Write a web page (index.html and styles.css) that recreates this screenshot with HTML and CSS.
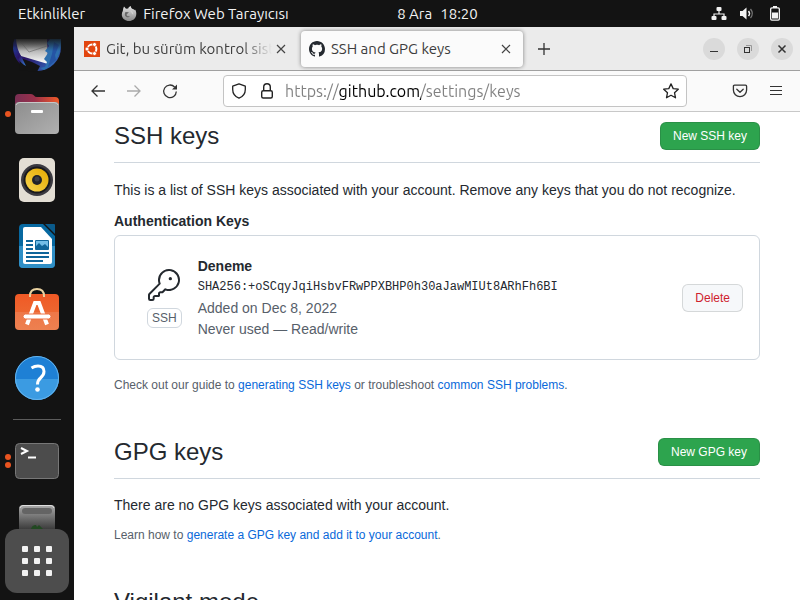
FILE: index.html
```html
<!DOCTYPE html>
<html lang="tr">
<head>
<meta charset="utf-8">
<title>SSH and GPG keys</title>
<link rel="stylesheet" href="styles.css">
</head>
<body>
<header class="topbar">
  <div class="topbar-side">
    <button class="bar-btn" type="button">Etkinlikler</button>
    <button class="bar-btn app-menu" type="button">
      <svg width="16" height="16" viewBox="0 0 16 16"><defs><linearGradient id="fx" x1="0" y1="0" x2="0" y2="1"><stop offset="0" stop-color="#e4e4e4"/><stop offset="1" stop-color="#888"/></linearGradient></defs><path fill="url(#fx)" d="M3 .6 5 2.800l2.200-.2C7.400 1.500 8.500.6 9.800 0c0 1.600 1 2.400 1.800 3.100L12.500 3l.6 1.300.9-.7C15.200 5.500 15.500 7 15.200 9c-.5 3.700-3.600 6-7.200 6S.8 12.500.8 8.700c0-1.500.3-2.700 1-3.700.2-1.600.6-3.200 1.200-4.400Z"/><path fill="#666" d="M4.500 6 8 6.200 6.500 7.500l-1 1.200c.6 1.500 2 2 3.500 1.300-1 1.700-4 1.700-5-.6-.3-1.400 0-2.400.5-3.400Z"/><path fill="#d0d0d0" d="M9 4.500c2.200.2 3.500 2 3.300 4.200L11 7.400Z"/></svg>
      <span>Firefox Web Tarayıcısı</span>
    </button>
  </div>
  <button class="bar-btn clock" type="button"><span>8 Ara</span><span>18:20</span></button>
  <div class="topbar-side status">
    <svg width="16" height="16" viewBox="0 0 16 16" fill="#f2f2f2"><rect x="5.500" y="1" width="5" height="4" rx="1"/><path d="M7.400 5h1.200v2.400h5V11h-1.200V8.600H3.600V11H2.400V7.400h5Z"/><rect x=".5" y="10" width="5" height="4" rx="1"/><rect x="10.500" y="10" width="5" height="4" rx="1"/></svg>
    <svg width="16" height="16" viewBox="0 0 16 16"><path fill="#f2f2f2" d="M1 5h2.500L7.500 1.500v12l-4-3.500H1Z"/><path d="M9.500 5q2 2.500 0 5" fill="none" stroke="#f2f2f2" stroke-width="1.500"/><path d="M11.500 3q3.600 4.500 0 9" fill="none" stroke="#777" stroke-width="1.300"/></svg>
    <svg width="16" height="16" viewBox="0 0 16 16" fill="#f2f2f2"><path fill-rule="evenodd" d="M6 0h4v1.300h1.200A1.800 1.800 0 0 1 13 3.100v9.900a1.800 1.800 0 0 1-1.800 1.800H4.800A1.800 1.800 0 0 1 3 13V3.100a1.800 1.800 0 0 1 1.800-1.800H6Zm-1 2.600a.7.7 0 0 0-.7.700v9.500a.7.700 0 0 0 .7.700h6a.7.700 0 0 0 .7-.7V3.300a.7.700 0 0 0-.7-.7Z"/><rect x="5" y="6.500" width="6" height="6"/></svg>
  </div>
</header>

<div class="desktop">
  <nav class="dock" aria-label="Dock">
    <ul class="dock-list">
      <li class="dock-item clipped">
        <svg width="48" height="33" viewBox="0 15 48 33"><defs><linearGradient id="tb" x1="0" y1="0" x2="1" y2="1"><stop offset="0" stop-color="#1d3f9c"/><stop offset=".5" stop-color="#2a1466"/><stop offset="1" stop-color="#367fd8"/></linearGradient><linearGradient id="en" x1="0" y1="0" x2="0" y2="1"><stop offset="0" stop-color="#777"/><stop offset="1" stop-color="#fff"/></linearGradient><linearGradient id="fade" x1="0" y1="0" x2="0" y2="1"><stop offset="0" stop-color="#131313" stop-opacity=".9"/><stop offset="1" stop-color="#131313" stop-opacity="0"/></linearGradient></defs><circle cx="24" cy="23" r="24" fill="url(#tb)"/><path d="M3 15h31l1 25L8 32Q4 26 3 15Z" fill="url(#en)"/><path d="m6 16 10 12 18-6" fill="none" stroke="#888"/><path fill="#2d6fae" d="M37 15h11c1 14-5 25-17 31l-4-2 5-1 2-5-3-3 4-6-3-2 4-5-2-3Z"/><path fill="#2554a5" d="m41 18 5 3-4 10 1 5-8 7 4-13Z"/><path fill="#131313" d="m7 34 12 4 8 4-3 6L6 46Z"/><path fill="url(#tb)" d="M0 24c2 8 7 15 13 18L8 32 2 22Z"/><rect y="14" width="48" height="13" fill="url(#fade)"/></svg>
      </li>
      <li class="dock-item">
        <span class="dots"><i></i></span>
        <svg width="48" height="48" viewBox="0 0 48 48"><defs><linearGradient id="fo" x1="0" x2="1"><stop offset="0" stop-color="#792f54"/><stop offset=".45" stop-color="#9b304a"/><stop offset="1" stop-color="#f05a28"/></linearGradient><linearGradient id="fg" x1="0" y1="0" x2="1" y2="1"><stop offset="0" stop-color="#8d8d8d"/><stop offset="1" stop-color="#b0b0b0"/></linearGradient></defs><path fill="url(#fo)" d="M2 8q0-4 4-4h12q2 0 3 1.500T24 7h18q4 0 4 4v9H2Z"/><rect x="2" y="12" width="44" height="32" rx="4" fill="url(#fg)"/><path d="M3 15q1-2.500 4-2.500h34q3 0 4 2.500" fill="none" stroke="#c8c8c8"/><rect x="18" y="20" width="12" height="3" rx="1" fill="#fff"/></svg>
      </li>
      <li class="dock-item">
        <svg width="48" height="48" viewBox="0 0 48 48"><defs><linearGradient id="rh" x1="0" y1="1" x2="1" y2="0"><stop offset="0" stop-color="#f8d54e"/><stop offset="1" stop-color="#e5a900"/></linearGradient></defs><rect x="6" y="2" width="36" height="44" rx="5" fill="#e3ded4"/><circle cx="24" cy="24" r="16" fill="#3b3a40"/><circle cx="24" cy="24" r="13.500" fill="#19191d"/><circle cx="24" cy="24" r="11.500" fill="url(#rh)"/><circle cx="24" cy="24" r="5" fill="#222329"/><circle cx="24" cy="23" r="2.500" fill="#3d3f47"/></svg>
      </li>
      <li class="dock-item">
        <svg width="48" height="48" viewBox="0 0 48 48"><path d="M10 2h20l12 12v28q0 4-4 4H10q-4 0-4-4V6q0-4 4-4Z" fill="#0768a0"/><path d="M6 24h36v18q0 4-4 4H10q-4 0-4-4Z" fill="#2f8fc6"/><path fill="#0a5a8a" d="M32 2h9q1 0 1 1v9Z"/><path d="M12 5h16l11 12v23q0 2-2 2H12q-2 0-2-2V7q0-2 2-2Z" fill="#fff"/><path d="M13 19h7m-7 4h7m-7 4h7m-7 4h23m-23 4h23m-23 4h17" stroke="#10659a" stroke-width="2"/><rect x="22" y="18" width="14" height="10" rx="1" fill="#10659a"/><rect x="23" y="19" width="12" height="8" fill="#73bde7"/><path d="M23 27v-3l3-3 3 3 3-2 3 3v2Z" fill="#10659a"/></svg>
      </li>
      <li class="dock-item">
        <svg width="48" height="48" viewBox="0 0 48 48"><defs><linearGradient id="so" x1="0" y1="0" x2="0" y2="1"><stop offset="0" stop-color="#f05925"/><stop offset=".5" stop-color="#ed6630"/><stop offset=".51" stop-color="#ee7748"/><stop offset="1" stop-color="#ed8050"/></linearGradient></defs><rect x="2" y="6" width="44" height="36" rx="4" fill="url(#so)"/><path d="M17 9V8q0-7 7-7t7 7v1" fill="none" stroke="#ead2a0" stroke-width="2"/><path d="M14 36.500 22 15h4l8 21.500" fill="none" stroke="#fff" stroke-width="4"/><rect x="10" y="26" width="28" height="5" rx="2.500" fill="#fff" stroke="#ec7143"/></svg>
      </li>
      <li class="dock-item">
        <svg width="48" height="48" viewBox="0 0 48 48"><circle cx="24" cy="24" r="22" fill="#1e80d5"/><path d="M2 25h44a22 21 0 0 1-44 0Z" fill="#3b9be2"/><circle cx="24" cy="24" r="21.500" fill="none" stroke="#65b4ed"/><path d="M18.500 14q3-2 6.500-2 6 0 6 5.500 0 3.500-3.500 6.500-3 2.500-3 6.500" fill="none" stroke="#fff" stroke-width="3"/><circle cx="24.500" cy="35.500" r="2.300" fill="#fff"/></svg>
      </li>
      <li class="dock-divider"></li>
      <li class="dock-item">
        <span class="dots"><i></i><i></i></span>
        <svg width="48" height="48" viewBox="0 0 48 48"><rect x="2.500" y="6.500" width="43" height="35" rx="4" fill="#4c4c4c" stroke="#777"/><path d="m8 11 6 3-6 3" fill="none" stroke="#fff" stroke-width="2"/><path d="M15 20.500h8" stroke="#fff" stroke-width="2"/></svg>
      </li>
      <li class="dock-item trash">
        <svg width="48" height="24" viewBox="0 0 48 24"><defs><linearGradient id="tr" x1="0" y1="0" x2="0" y2="1"><stop offset="0" stop-color="#aaa"/><stop offset="1" stop-color="#3c3c3c"/></linearGradient></defs><path fill="url(#tr)" d="M6 24V4q0-4 4-4h28q4 0 4 4v20Z"/><path d="M7 3q1-2.500 3-2.500h28q2 0 3 2.500" fill="none" stroke="#ddd"/><rect x="9" y="3" width="30" height="6" rx="3" fill="#646464"/><path fill="#214821" d="M18 24q1-4 5-4l1 2 2-2 4 4Z"/></svg>
      </li>
    </ul>
    <button class="apps-btn" type="button" aria-label="Uygulamaları Göster">
      <svg width="32" height="32" viewBox="0 0 32 32" fill="#f2f2f2"><rect x="1" y="1" width="6" height="6" rx="1"/><rect x="13" y="1" width="6" height="6" rx="1"/><rect x="25" y="1" width="6" height="6" rx="1"/><rect x="1" y="13" width="6" height="6" rx="1"/><rect x="13" y="13" width="6" height="6" rx="1"/><rect x="25" y="13" width="6" height="6" rx="1"/><rect x="1" y="25" width="6" height="6" rx="1"/><rect x="13" y="25" width="6" height="6" rx="1"/><rect x="25" y="25" width="6" height="6" rx="1"/></svg>
    </button>
  </nav>

  <section class="window">
    <div class="tabstrip">
      <div class="tab">
        <svg width="16" height="16" viewBox="0 0 16 16"><rect width="16" height="16" fill="#e2450f"/><circle cx="8" cy="8" r="4.400" fill="none" stroke="#fff" stroke-width="2"/><g fill="#fff" stroke="#e2450f" stroke-width=".8"><circle cx="3" cy="8" r="2"/><circle cx="10.500" cy="3.500" r="2"/><circle cx="10.500" cy="12.500" r="2"/></g></svg>
        <span class="tab-title faded">Git, bu sürüm kontrol sistemi</span>
        <button class="tab-close" type="button" aria-label="Sekmeyi kapat"><svg width="10" height="10" viewBox="0 0 10 10"><path d="m1 1 8 8m0-8-8 8" stroke="#444" stroke-width="1.200"/></svg></button>
      </div>
      <div class="tab active">
        <svg width="16" height="16" viewBox="0 0 16 16"><path fill="#24292f" d="M8 0C3.580 0 0 3.580 0 8c0 3.540 2.290 6.530 5.470 7.590.4.070.55-.17.55-.38 0-.19-.01-.82-.01-1.490-2.010.37-2.530-.49-2.690-.94-.09-.23-.48-.94-.82-1.130-.28-.15-.68-.52-.01-.53.63-.01 1.080.58 1.230.82.72 1.210 1.870.87 2.330.66.07-.52.28-.87.51-1.070-1.780-.2-3.640-.89-3.640-3.950 0-.87.31-1.590.82-2.150-.08-.2-.36-1.020.08-2.120 0 0 .67-.21 2.200.82.64-.18 1.320-.27 2-.27s1.360.09 2 .27c1.530-1.040 2.200-.82 2.200-.82.44 1.100.16 1.920.08 2.120.51.56.82 1.270.82 2.150 0 3.070-1.870 3.750-3.650 3.950.29.25.54.73.54 1.480 0 1.070-.01 1.930-.01 2.200 0 .21.15.46.55.38A8.010 8.010 0 0 0 16 8c0-4.420-3.580-8-8-8Z"/></svg>
        <span class="tab-title">SSH and GPG keys</span>
        <button class="tab-close" type="button" aria-label="Sekmeyi kapat"><svg width="10" height="10" viewBox="0 0 10 10"><path d="m1 1 8 8m0-8-8 8" stroke="#444" stroke-width="1.200"/></svg></button>
      </div>
      <button class="icon-btn new-tab" type="button" aria-label="Yeni sekme"><svg width="12" height="12" viewBox="0 0 12 12"><path d="M6 0v12M0 6h12" stroke="#333" stroke-width="1.300"/></svg></button>
      <div class="window-controls">
        <button type="button" aria-label="Simge durumuna küçült"><svg width="10" height="10" viewBox="0 0 10 10"><path d="M1 7.500h8" stroke="#333"/></svg></button>
        <button type="button" aria-label="Geri yükle"><svg width="10" height="10" viewBox="0 0 10 10"><path d="M3 1.500h5.500V7" fill="none" stroke="#999"/><rect x="1.500" y="3.500" width="5" height="5" fill="none" stroke="#333"/></svg></button>
        <button type="button" aria-label="Kapat"><svg width="10" height="10" viewBox="0 0 10 10"><path d="m1.500 1.500 7 7m0-7-7 7" stroke="#333" stroke-width="1.500"/></svg></button>
      </div>
    </div>

    <div class="toolbar">
      <div class="nav-btns">
        <button class="icon-btn" type="button" aria-label="Geri"><svg width="16" height="16" viewBox="0 0 16 16"><path d="M15 8H2m5.500-5.500L2 8l5.500 5.500" fill="none" stroke="#333" stroke-width="1.300"/></svg></button>
        <button class="icon-btn" type="button" aria-label="İleri"><svg width="16" height="16" viewBox="0 0 16 16"><path d="M1 8h13M8.500 2.500 14 8l-5.500 5.500" fill="none" stroke="#aaa" stroke-width="1.300"/></svg></button>
        <button class="icon-btn" type="button" aria-label="Yenile"><svg width="16" height="16" viewBox="0 0 16 16"><path d="M12.600 4A6.300 6.300 0 1 0 14.300 8.500" fill="none" stroke="#333" stroke-width="1.300"/><path d="M15 1.500v5H10Z" fill="#333"/></svg></button>
      </div>
      <div class="urlbar">
        <svg width="16" height="16" viewBox="0 0 16 16"><path d="M8 .8 14.300 3.200v3.300c0 4.200-2.500 7.200-6.300 8.700-3.800-1.500-6.300-4.500-6.300-8.700V3.200Z" fill="none" stroke="#222" stroke-width="1.300" stroke-linejoin="round"/></svg>
        <svg class="lock" width="16" height="16" viewBox="0 0 16 16"><path d="M4.700 7.500V4a3.300 3.300 0 0 1 6.600 0v3.500" fill="none" stroke="#222" stroke-width="1.400"/><rect x="2.700" y="7.700" width="10.600" height="7.300" rx="1.500" fill="none" stroke="#222" stroke-width="1.400"/></svg>
        <input class="url" type="text" aria-label="Adres" value="https://github.com/settings/keys">
        <svg width="16" height="16" viewBox="0 0 16 16"><path d="m8 .9 2.200 4.700 5.100.6-3.800 3.500 1 5.100L8 12.300l-4.500 2.500 1-5.100L.7 6.200l5.100-.6Z" fill="none" stroke="#222" stroke-width="1.300" stroke-linejoin="round"/></svg>
      </div>
      <div class="tool-btns">
        <button class="icon-btn" type="button" aria-label="Pocket'a kaydet"><svg width="16" height="16" viewBox="0 0 16 16" fill="none" stroke="#333" stroke-width="1.300" stroke-linecap="round" stroke-linejoin="round"><path d="M2.500 2.200h11q1.100 0 1.100 1.100V7a6.600 6.600 0 0 1-13.200 0V3.300q0-1.100 1.100-1.100Z"/><path d="M4.800 6.200 8 9.300l3.200-3.100"/></svg></button>
        <button class="icon-btn" type="button" aria-label="Menü"><svg width="16" height="16" viewBox="0 0 16 16"><path d="M2 3.500h12M2 7.500h12m-12 4h12" stroke="#333" stroke-width="1.200"/></svg></button>
      </div>
    </div>

    <main class="page" lang="en">
      <div class="subhead">
        <h2>SSH keys</h2>
        <button class="btn primary" type="button">New SSH key</button>
      </div>
      <p class="intro">This is a list of SSH keys associated with your account. Remove any keys that you do not recognize.</p>
      <h3>Authentication Keys</h3>
      <div class="key-card">
        <div class="key-kind">
          <svg width="32" height="32" viewBox="0 0 24 24" fill="#24292f"><circle cx="16.750" cy="7.250" r="1.250"/><path d="M15.750 0a8.250 8.250 0 1 1-2.541 16.101l-1.636 1.636a1.744 1.744 0 0 1-1.237.513H9.250a.25.25 0 0 0-.25.25v1.448a.876.876 0 0 1-.256.619l-.214.213a.75.75 0 0 1-.545.22H5.250a.25.25 0 0 0-.25.25v1A1.750 1.750 0 0 1 3.250 24h-1.500A1.750 1.750 0 0 1 0 22.250v-2.836c0-.464.185-.908.513-1.236l7.386-7.388A8.249 8.249 0 0 1 15.750 0ZM9 8.250a6.733 6.733 0 0 0 .463 2.462.75.75 0 0 1-.168.804l-7.722 7.721a.25.25 0 0 0-.073.177v2.836c0 .138.112.25.25.25h1.500a.25.25 0 0 0 .25-.25v-1c0-.966.784-1.750 1.750-1.750H7.500v-1c0-.966.784-1.750 1.750-1.750h1.086a.25.25 0 0 0 .177-.073l1.971-1.972a.75.75 0 0 1 .804-.168A6.750 6.750 0 1 0 9 8.250Z"/></svg>
          <span class="label">SSH</span>
        </div>
        <div class="key-info">
          <strong>Deneme</strong>
          <code>SHA256:+oSCqyJqiHsbvFRwPPXBHP0h30aJawMIUt8ARhFh6BI</code>
          <span>Added on Dec 8, 2022</span>
          <span>Never used — Read/write</span>
        </div>
        <button class="btn danger" type="button">Delete</button>
      </div>
      <p class="note">Check out our guide to <a href="#">generating SSH keys</a> or troubleshoot <a href="#">common SSH problems</a>.</p>

      <div class="subhead next">
        <h2>GPG keys</h2>
        <button class="btn primary" type="button">New GPG key</button>
      </div>
      <p>There are no GPG keys associated with your account.</p>
      <p class="note learn">Learn how to <a href="#">generate a GPG key and add it to your account</a>.</p>

      <div class="subhead next">
        <h2>Vigilant mode</h2>
      </div>
    </main>
  </section>
</div>
</body>
</html>
```

FILE: styles.css
```css
* { box-sizing: border-box; }

body {
  margin: 0;
  height: 100vh;
  display: flex;
  flex-direction: column;
  overflow: hidden;
  background: #131313;
  font-family: Ubuntu, "Noto Sans", sans-serif;
  font-size: 15px;
}

button {
  margin: 0;
  padding: 0;
  border: 0;
  background: none;
  color: inherit;
  font: inherit;
}

svg { display: block; flex: none; }

/* Top bar */
.topbar {
  display: flex;
  align-items: center;
  height: 27px;
  flex: none;
  padding: 0 17px 0 18px;
  color: #f2f2f2;
}
.topbar-side { flex: 1 1 0; min-width: 0; display: flex; align-items: center; gap: 36px; }
.bar-btn { white-space: nowrap; }
.app-menu { display: flex; align-items: center; gap: 6px; }
.clock { display: flex; gap: 8px; padding-left: 74px; }
.status { justify-content: flex-end; gap: 12px; }

/* Dock */
.desktop { flex: 1; display: flex; min-height: 0; }
.dock {
  width: 74px;
  flex: none;
  display: flex;
  flex-direction: column;
  align-items: center;
  padding: 12px 0 7px;
}
.dock-list {
  flex: 1;
  min-height: 0;
  width: 100%;
  margin: 0;
  padding: 0;
  list-style: none;
  overflow: hidden;
}
.dock-item {
  position: relative;
  height: 66px;
  display: flex;
  align-items: center;
  justify-content: center;
}
.dock-item.clipped { height: 42px; align-items: flex-start; }
.dock-item.trash { height: 35px; align-items: flex-end; }
.dock-divider { height: 1px; margin: 8px 13px; background: #5c5c5c; }
.dots {
  position: absolute;
  left: 5px;
  top: 0;
  height: 100%;
  display: flex;
  flex-direction: column;
  justify-content: center;
  gap: 2px;
}
.dots i { width: 6px; height: 6px; border-radius: 50%; background: #e95420; }
.apps-btn {
  width: 64px;
  height: 64px;
  flex: none;
  display: flex;
  align-items: center;
  justify-content: center;
  border-radius: 12px;
  background: #4d4d4d;
}

/* Browser window */
.window { flex: 1; min-width: 0; display: flex; flex-direction: column; background: #fff; }
.tabstrip {
  display: flex;
  align-items: center;
  height: 44px;
  flex: none;
  padding: 0 7px 0 2px;
  border-bottom: 1px solid #a0a0a0;
  background: #ebebeb;
  color: #3d3d3d;
}
.tab {
  display: flex;
  align-items: center;
  gap: 6px;
  width: 222px;
  height: 36px;
  padding: 0 8px;
  border-radius: 4px;
}
.tab.active { margin-left: 3px; background: #fbfbfb; box-shadow: 0 0 4px rgba(0, 0, 0, .45); }
.tab-title { flex: 1; min-width: 0; overflow: hidden; white-space: nowrap; }
.faded { margin-right: -6px; mask-image: linear-gradient(to right, #000 82%, transparent); }
.tab-close, .icon-btn {
  width: 18px;
  height: 24px;
  display: flex;
  align-items: center;
  justify-content: center;
}
.icon-btn { width: 24px; }
.new-tab { margin-left: 9px; }
.window-controls { display: flex; gap: 12px; margin-left: auto; }
.window-controls button {
  width: 22px;
  height: 22px;
  display: flex;
  align-items: center;
  justify-content: center;
  border-radius: 50%;
  background: #dadada;
}

.toolbar {
  display: flex;
  align-items: center;
  justify-content: space-between;
  height: 41px;
  flex: none;
  padding: 0 12px;
  border-bottom: 1px solid #c8c8c8;
  background: #fafafa;
}
.nav-btns, .tool-btns { display: flex; gap: 12px; }
.urlbar {
  display: flex;
  align-items: center;
  gap: 10px;
  flex: 1;
  height: 32px;
  margin: 0 41px;
  padding: 0 7px;
  border: 1px solid #c4c4c4;
  border-radius: 4px;
  background: #fff;
}
.lock { margin-left: 2px; }
.url {
  flex: 1;
  min-width: 0;
  height: 24px;
  padding: 0;
  border: 0;
  outline: 0;
  font: inherit;
  font-size: 16px;
  /* the host part of the address is drawn darker than the rest */
  background: linear-gradient(to right, #808080 54px, #000 54px, #000 136px, #808080 136px);
  background-clip: text;
  color: transparent;
}

/* Settings page */
.page {
  flex: 1;
  min-height: 0;
  overflow: hidden;
  padding: 6px 40px 0;
  color: #24292f;
  font-family: "Liberation Sans", Arial, sans-serif;
  font-size: 14px;
  line-height: 21px;
}
.subhead {
  display: flex;
  align-items: center;
  justify-content: space-between;
  margin-bottom: 16px;
  padding-bottom: 8px;
  border-bottom: 1px solid #d0d7de;
}
.subhead.next { margin-top: 40px; }
h2 { margin: 0; font-size: 24px; font-weight: 400; line-height: 36px; }
h3 { margin: 0 0 3px; font-size: 14px; }
p { margin: 0 0 10px; }
.intro { margin-top: 17px; }
.subhead:has(+ .intro) { margin-bottom: 0; }
.note { margin: 16px 0 0; font-size: 12px; line-height: 18px; color: #57606a; }
.note.learn { margin-top: 10px; }
a { color: #0969da; text-decoration: none; }

.btn {
  height: 28px;
  padding: 0 12px;
  border: 1px solid rgba(27, 31, 36, .15);
  border-radius: 6px;
  font-family: inherit;
  font-size: 12px;
}
.primary { background: #2da44e; color: #fff; }
.danger { background: #f6f8fa; color: #cf222e; }

.key-card {
  display: flex;
  align-items: center;
  padding: 20px 16px 19px;
  border: 1px solid #d0d7de;
  border-radius: 6px;
}
.key-kind { display: flex; flex-direction: column; align-items: center; gap: 7px; margin: 0 16px; }
.label {
  height: 20px;
  padding: 0 4px;
  border: 1px solid #d0d7de;
  border-radius: 6px;
  font-size: 12px;
  line-height: 18px;
  color: #57606a;
}
.key-info { flex: 1; min-width: 0; display: flex; flex-direction: column; color: #57606a; }
.key-info strong { color: #24292f; }
.key-info code {
  color: #24292f;
  font-family: "Liberation Mono", monospace;
  font-size: 12px;
}
```
